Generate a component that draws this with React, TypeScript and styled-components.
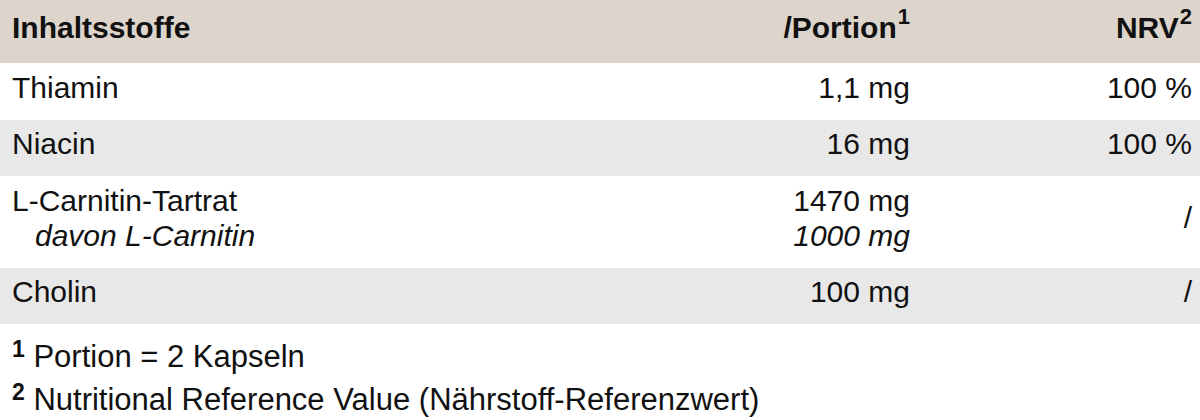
import React from 'react';
import styled, {createGlobalStyle} from 'styled-components';

const HEADER_BG = '#ddd5cb';
const SHADE_BG = '#e8e8e8';
const TEXT_COLOR = '#111111';

const GlobalStyle = createGlobalStyle`
  html, body {
    margin: 0;
    padding: 0;
    background: #ffffff;
  }
  body {
    font-family: "Liberation Sans", Arial, sans-serif;
    color: ${TEXT_COLOR};
  }
`;

const Page = styled.div`
  width: 1200px;
  height: 420px;
  overflow: hidden;
  font-size: 30px;
  line-height: 35px;
`;

const Row = styled.div<{ $shade?: boolean }>`
  display: grid;
  grid-template-columns: 1fr 320px 282px;
  background: ${p => (p.$shade ? SHADE_BG : '#ffffff')};
`;

const HeaderRow = styled(Row)`
  background: ${HEADER_BG};
  font-weight: bold;
`;

const Cell = styled.div<{ $right?: boolean; $middle?: boolean }>`
  padding: 6.5px 8px 15px 12px;
  text-align: ${p => (p.$right ? 'right' : 'left')};
  align-self: ${p => (p.$middle ? 'center' : 'start')};
`;

const HeadCell = styled(Cell)`
  padding-top: 10px;
  padding-bottom: 18px;
`;

const Line = styled.div``;

const SubLine = styled.div<{ $indent?: boolean }>`
  font-style: italic;
  padding-left: ${p => (p.$indent ? '23px' : '0')};
`;

const Sup = styled.sup`
  font-size: 22px;
  font-weight: bold;
  line-height: 0;
  vertical-align: 14px;
  margin-left: 1px;
`;

const Footnotes = styled.div`
  padding: 11px 12px 0;
  font-size: 31px;
  line-height: 43px;
`;

const Note = styled.div``;

const NoteMark = styled.sup`
  font-size: 23px;
  font-weight: bold;
  line-height: 0;
  vertical-align: 10px;
`;

type Item = {
  name: string;
  amount: string;
  nrv: string;
  subName?: string;
  subAmount?: string;
};

const items: Item[] = [
  {name: 'Thiamin', amount: '1,1 mg', nrv: '100 %'},
  {name: 'Niacin', amount: '16 mg', nrv: '100 %'},
  {
    name: 'L-Carnitin-Tartrat',
    amount: '1470 mg',
    nrv: '/',
    subName: 'davon L-Carnitin',
    subAmount: '1000 mg'
  },
  {name: 'Cholin', amount: '100 mg', nrv: '/'}
];

const App = () => {
  return (
    <Page>
      <GlobalStyle />
      <HeaderRow>
        <HeadCell>Inhaltsstoffe</HeadCell>
        <HeadCell $right>/Portion<Sup>1</Sup></HeadCell>
        <HeadCell $right>NRV<Sup>2</Sup></HeadCell>
      </HeaderRow>

      {items.map((item, i) => (
        <Row key={item.name} $shade={i % 2 === 1}>
          <Cell>
            <Line>{item.name}</Line>
            {item.subName && <SubLine $indent>{item.subName}</SubLine>}
          </Cell>
          <Cell $right>
            <Line>{item.amount}</Line>
            {item.subAmount && <SubLine>{item.subAmount}</SubLine>}
          </Cell>
          <Cell $right $middle={!!item.subName}>{item.nrv}</Cell>
        </Row>
      ))}

      <Footnotes>
        <Note><NoteMark>1</NoteMark> Portion = 2 Kapseln</Note>
        <Note><NoteMark>2</NoteMark> Nutritional Reference Value (Nährstoff-Referenzwert)</Note>
      </Footnotes>
    </Page>
  );
};

export default App;
